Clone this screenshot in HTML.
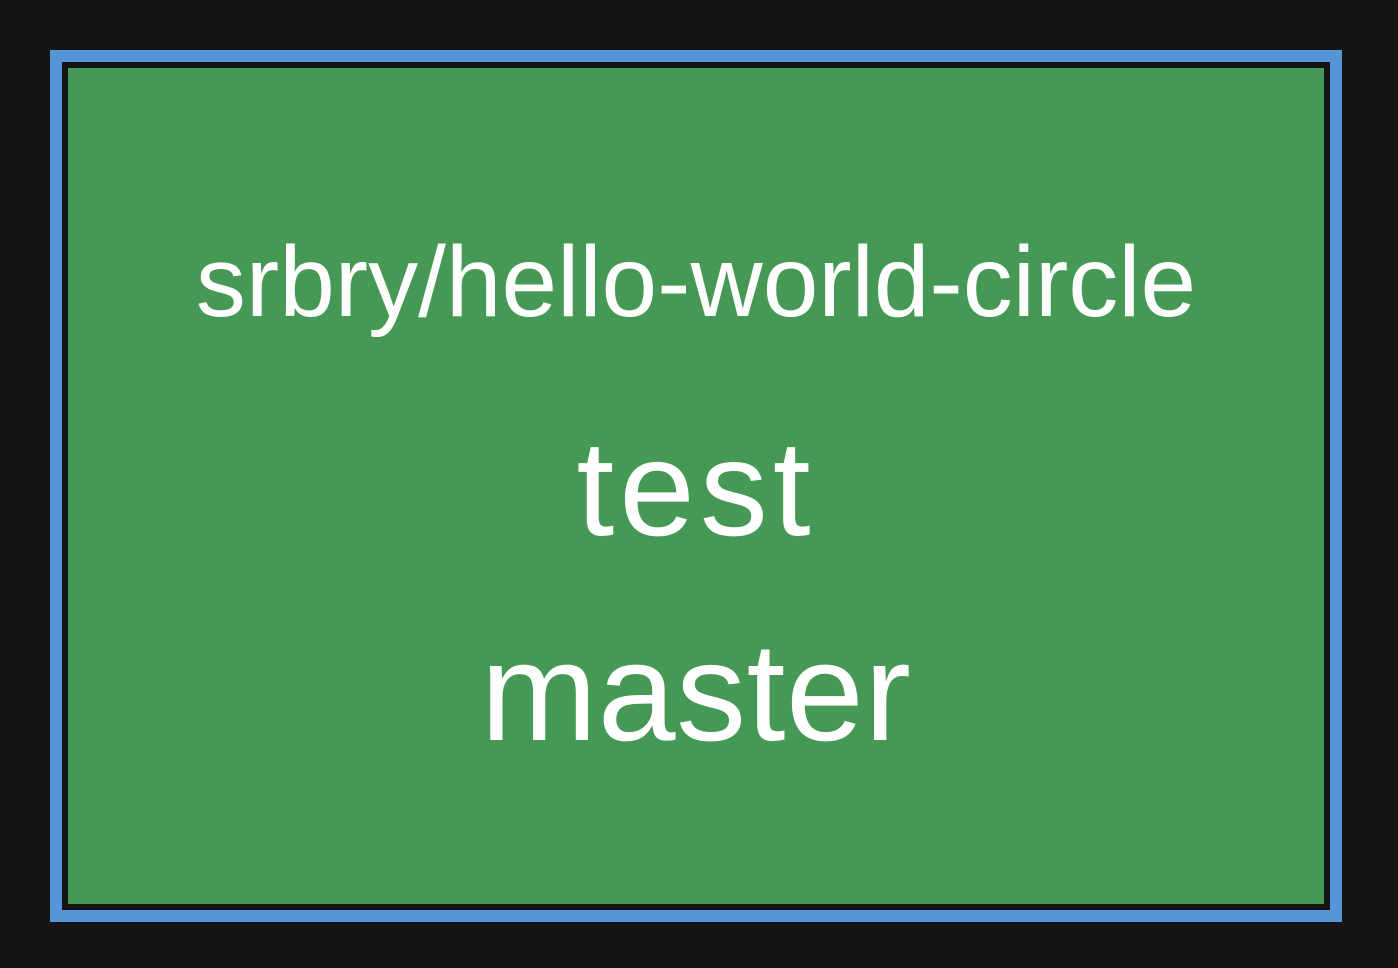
<!DOCTYPE html>
<html><head><style>
html,body{margin:0;padding:0;background:#151515;width:1398px;height:968px;overflow:hidden}
.outer{position:absolute;left:50px;top:50px;width:1268px;height:848px;border:12px solid #5497d6;background:#151515}
.inner{position:absolute;left:6px;top:6px;right:6px;bottom:6px;background:#459955}
.t{position:absolute;left:0;right:0;text-align:center;color:#fff;font-family:"Liberation Sans",sans-serif;white-space:nowrap;line-height:1}
</style></head><body>
<div class="outer"><div class="inner">
<div class="t" style="top:164px;font-size:100px;letter-spacing:0px">srbry/hello-world-circle</div>
<div class="t" style="top:352px;font-size:136px;letter-spacing:5px">test</div>
<div class="t" style="top:554px;font-size:140px;letter-spacing:0.5px">master</div>
</div></div>
</body></html>
